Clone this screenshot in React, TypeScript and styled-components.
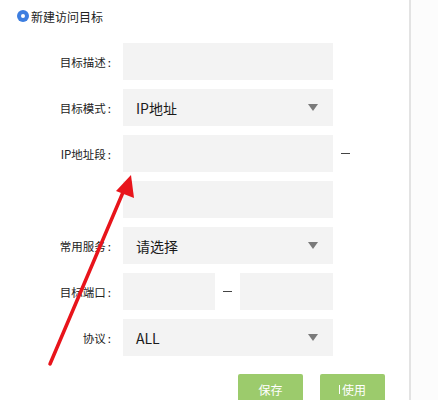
import React from "react";
import styled, { createGlobalStyle } from "styled-components";

const GlobalStyle = createGlobalStyle`
  html, body {
    margin: 0;
    padding: 0;
    background: #ffffff;
    font-family: "Noto Sans CJK SC", "Liberation Sans", sans-serif;
  }
`;

const Page = styled.div`
  position: relative;
  width: 438px;
  height: 400px;
  overflow: hidden;
  background: #fcfcfc;
`;

const Panel = styled.div`
  width: 411px;
  height: 400px;
  background: #ffffff;
  border-right: 2px solid #e3e3e3;
  box-sizing: border-box;
`;

const RadioRow = styled.div`
  display: flex;
  align-items: center;
  gap: 2px;
  height: 16px;
  padding: 8px 0 0 17px;
  font-size: 12px;
  color: #222222;
`;

const RadioDot = styled.span`
  width: 12px;
  height: 12px;
  border-radius: 50%;
  background: #3d7ee0;
  display: flex;
  align-items: center;
  justify-content: center;
  &::after {
    content: "";
    width: 4px;
    height: 4px;
    border-radius: 50%;
    background: #ffffff;
  }
`;

const Form = styled.div`
  display: flex;
  flex-direction: column;
  gap: 9px;
  padding-top: 19px;
`;

const Row = styled.div`
  display: flex;
  align-items: center;
  height: 37px;
`;

const Label = styled.div`
  width: 111px;
  margin-right: 12px;
  text-align: right;
  font-size: 11.5px;
  color: #222222;
  white-space: nowrap;
  &:not(:empty)::after {
    content: ":";
    margin-left: 2px;
  }
`;

const Field = styled.div<{ $width?: number }>`
  width: ${(p) => p.$width ?? 210}px;
  height: 37px;
  background: #f3f3f3;
  display: flex;
  align-items: center;
  justify-content: space-between;
  padding: 0 15px 0 13px;
  box-sizing: border-box;
  font-size: 14px;
  color: #1a1a1a;
`;

const Caret = styled.span`
  width: 0;
  height: 0;
  border-left: 5px solid transparent;
  border-right: 5px solid transparent;
  border-top: 7px solid #7a7a7a;
`;

const Dash = styled.span`
  width: 25px;
  display: flex;
  justify-content: center;
  &::before {
    content: "";
    width: 9px;
    height: 1px;
    background: #444444;
  }
`;

const Buttons = styled.div`
  display: flex;
  gap: 17px;
  padding: 18px 0 0 238px;
`;

const Button = styled.div`
  width: 65px;
  height: 30px;
  background: #9ccb6c;
  border-radius: 2px;
  color: #ffffff;
  font-size: 12px;
  display: flex;
  align-items: center;
  justify-content: center;
`;

const Cursor = styled.span`
  width: 1px;
  height: 9px;
  background: #ffffff;
  margin-right: 2px;
`;

const Arrow = styled.svg`
  position: absolute;
  left: 0;
  top: 0;
  pointer-events: none;
`;

function Select({ value }: { value: string }) {
  return (
    <Field>
      <span>{value}</span>
      <Caret />
    </Field>
  );
}

export default function App() {
  return (
    <Page>
      <GlobalStyle />
      <Panel>
        <RadioRow>
          <RadioDot />
          新建访问目标
        </RadioRow>
        <Form>
          <Row>
            <Label>目标描述</Label>
            <Field />
          </Row>
          <Row>
            <Label>目标模式</Label>
            <Select value="IP地址" />
          </Row>
          <Row>
            <Label>IP地址段</Label>
            <Field />
            <Dash />
          </Row>
          <Row>
            <Label />
            <Field />
          </Row>
          <Row>
            <Label>常用服务</Label>
            <Select value="请选择" />
          </Row>
          <Row>
            <Label>目标端口</Label>
            <Field $width={92} />
            <Dash />
            <Field $width={93} />
          </Row>
          <Row>
            <Label>协议</Label>
            <Select value="ALL" />
          </Row>
        </Form>
        <Buttons>
          <Button>保存</Button>
          <Button>
            <Cursor />
            使用
          </Button>
        </Buttons>
      </Panel>
      <Arrow width="438" height="400" viewBox="0 0 438 400">
        <line x1="50" y1="364" x2="124" y2="190" stroke="#e8141b" strokeWidth="3.5" strokeLinecap="round" />
        <polygon points="131,175 116,191 134,198" fill="#e8141b" />
      </Arrow>
    </Page>
  );
}
